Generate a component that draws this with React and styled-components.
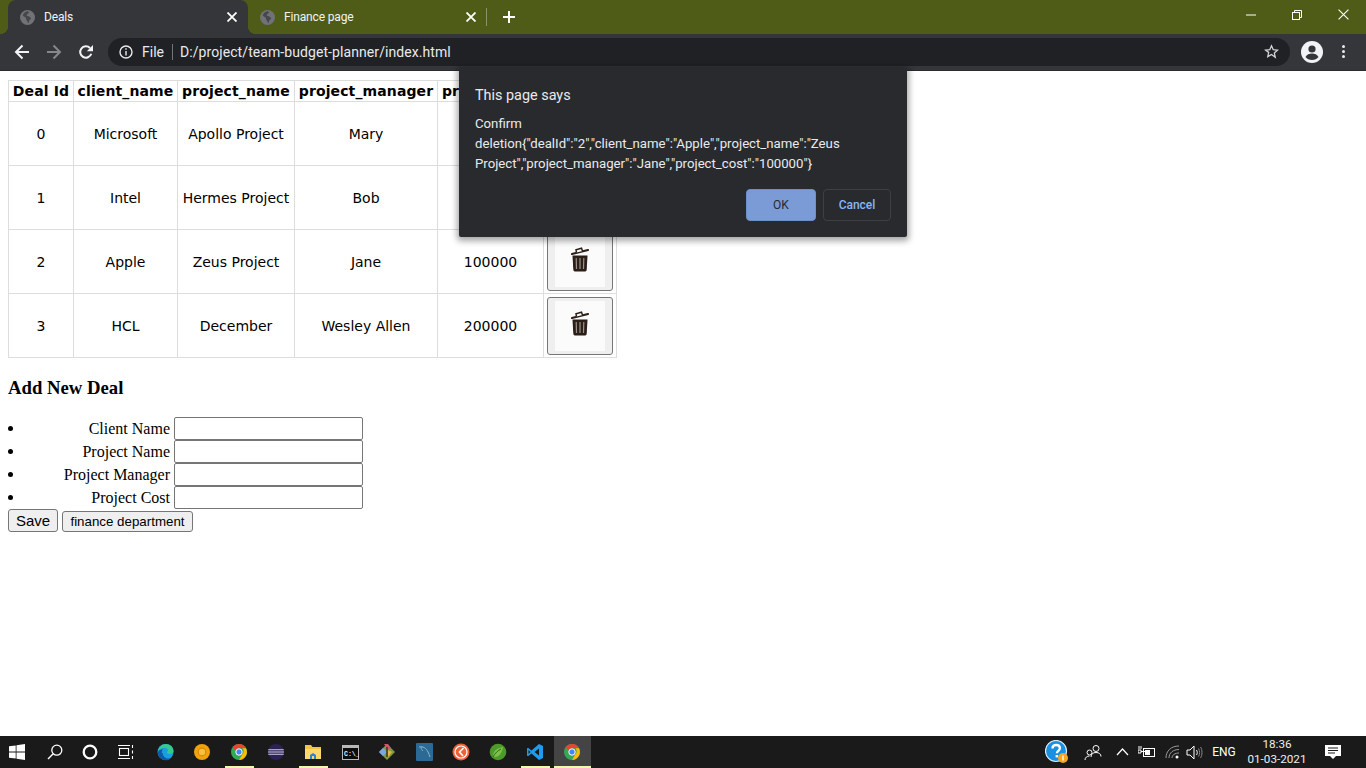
import React from 'react';
import styled, { createGlobalStyle } from 'styled-components';

const Global = createGlobalStyle`
  html, body { margin: 0; padding: 0; height: 100%; overflow: hidden; background: #fff; }
  #root { height: 100%; }
`;

const UI_FONT = `Roboto, "Open Sans", sans-serif`;

const Screen = styled.div`
  position: relative;
  display: flex;
  flex-direction: column;
  height: 768px;
  width: 1366px;
  font-family: "Liberation Serif", serif;
`;

/* ---------- browser chrome ---------- */
const TabBar = styled.div`
  display: flex;
  align-items: stretch;
  height: 34px;
  padding-left: 8px;
  background: #4e5c18;
  color: #fff;
  font: 12px ${UI_FONT};
`;

const Tab = styled.div`
  position: relative;
  display: flex;
  align-items: center;
  width: ${(p) => (p.$active ? 240 : 238)}px;
  padding: 0 ${(p) => (p.$active ? 1 : 0)}px 0 12px;
  box-sizing: border-box;
  background: ${(p) => (p.$active ? '#35363a' : 'transparent')};
  border-radius: 8px 8px 0 0;

  &::before,
  &::after {
    content: '';
    display: ${(p) => (p.$active ? 'block' : 'none')};
    position: absolute;
    bottom: 0;
    width: 8px;
    height: 8px;
  }

  &::before {
    left: -8px;
    background: radial-gradient(circle at 0 0, transparent 8px, #35363a 8px);
  }

  &::after {
    right: -8px;
    background: radial-gradient(circle at 100% 0, transparent 8px, #35363a 8px);
  }
`;

const TabTitle = styled.span`
  flex: 1;
  margin-left: 9px;
  color: #f1f3f4;
  letter-spacing: -0.15px;
`;

const TabClose = styled.span`
  display: flex;
  width: 16px;
  justify-content: center;
  margin-right: 7px;
`;

const TabDivider = styled.div`
  width: 1px;
  height: 18px;
  margin: 8px 0 0 0;
  background: #8b9468;
`;

const NewTab = styled.div`
  display: flex;
  align-items: center;
  justify-content: center;
  width: 44px;
`;

const WindowControls = styled.div`
  display: flex;
  margin-left: auto;
  padding-right: 0;
`;

const WindowButton = styled.div`
  display: flex;
  align-items: center;
  justify-content: center;
  width: 46px;
  height: 29px;
`;

const Toolbar = styled.div`
  display: flex;
  align-items: center;
  height: 37px;
  box-sizing: border-box;
  padding: 0 0 1px 6px;
  background: #35363a;
  border-bottom: 1px solid #2a2b2e;
  color: #f1f3f4;
`;

const NavButton = styled.div`
  display: flex;
  align-items: center;
  justify-content: center;
  width: 32px;
  height: 28px;
`;

const Omnibox = styled.div`
  display: flex;
  align-items: center;
  width: 1182px;
  height: 28px;
  box-sizing: border-box;
  margin-left: 6px;
  padding: 0 11px 0 11px;
  background: #202124;
  border-radius: 14px;
  font: 14px ${UI_FONT};
`;

const FileLabel = styled.span`
  margin-left: 9px;
  padding-right: 8px;
  border-right: 1px solid #70757a;
  line-height: 16px;
  color: #e8eaed;
`;

const Url = styled.span`
  flex: 1;
  margin-left: 7px;
  color: #e8eaed;
  letter-spacing: 0.08px;
`;

const Avatar = styled.div`
  display: flex;
  justify-content: center;
  width: 24px;
  margin-left: 10px;
`;

const MenuDots = styled.div`
  display: flex;
  flex-direction: column;
  gap: 2px;
  margin-left: 18px;
`;

const Dot = styled.i`
  display: block;
  width: 3px;
  height: 3px;
  border-radius: 50%;
  background: #e8eaed;
`;

/* ---------- page ---------- */
const Page = styled.main`
  flex: 1;
  padding: 9px 8px 8px;
  background: #fff;
  color: #000;
`;

const Table = styled.table`
  border-collapse: collapse;
  table-layout: fixed;
  width: 608px;
  font: 14px "DejaVu Sans", Verdana, sans-serif;
  color: #000;
`;

const Th = styled.th`
  border: 1px solid #ddd;
  height: 20px;
  padding: 0;
  font-weight: 700;
  font-size: 14px;
  letter-spacing: 0.12px;
  text-align: center;
  white-space: nowrap;
  overflow: hidden;
`;

const Td = styled.td`
  border: 1px solid #ddd;
  height: 63px;
  padding: 0;
  text-align: center;
`;

const DeleteButton = styled.button`
  display: flex;
  align-items: center;
  justify-content: center;
  width: 66px;
  height: 58px;
  margin: 0 auto;
  padding: 0;
  background: #efefef;
  border: 1px solid #767676;
  border-radius: 3px;
`;

const TrashTile = styled.span`
  display: flex;
  align-items: center;
  justify-content: center;
  width: 50px;
  height: 50px;
  box-sizing: border-box;
  padding-bottom: 5px;
  background: #fbfbfb;
`;

const Heading = styled.h3`
  margin: 19px 0 19px;
  font-size: 18.72px;
  line-height: 21px;
`;

const FieldList = styled.ul`
  margin: 0;
  padding: 0;
  list-style: none;
`;

const Field = styled.li`
  display: flex;
  align-items: center;
  height: 23px;
  font-size: 16px;

  &::before {
    content: '';
    width: 5px;
    height: 5px;
    margin-right: 1px;
    margin-left: 0;
    border-radius: 50%;
    background: #000;
  }
`;

const FieldLabel = styled.label`
  width: 156px;
  text-align: right;
`;

const FieldInput = styled.input`
  width: 189px;
  height: 23px;
  box-sizing: border-box;
  margin-left: 4px;
  padding: 1px 2px;
  background: #fff;
  border: 1px solid #767676;
  border-radius: 2px;
`;

const Actions = styled.div`
  display: flex;
  align-items: flex-end;
  gap: 4px;
`;

const FormButton = styled.button`
  height: ${(p) => (p.$large ? 23 : 21)}px;
  width: ${(p) => (p.$large ? 50 : 131)}px;
  padding: 0;
  background: #efefef;
  border: 1px solid #767676;
  border-radius: 3px;
  color: #000;
  font: ${(p) => (p.$large ? 15 : 13.33)}px "Liberation Sans", Arial, sans-serif;
`;

/* ---------- confirm dialog ---------- */
const Dialog = styled.div`
  position: absolute;
  top: 67px;
  left: 459px;
  width: 448px;
  height: 170px;
  box-sizing: border-box;
  padding: 19px 16px 16px;
  background: #292a2d;
  border-radius: 0 0 2px 2px;
  box-shadow: 0 2px 6px 2px rgba(0, 0, 0, 0.35);
  color: #e8eaed;
  font-family: ${UI_FONT};
`;

const DialogTitle = styled.div`
  font-size: 14.4px;
  line-height: 20px;
`;

const DialogMessage = styled.div`
  width: 400px;
  margin-top: 8px;
  font-size: 13.2px;
  line-height: 20px;
`;

const DialogActions = styled.div`
  display: flex;
  justify-content: flex-end;
  gap: 7px;
  margin-top: 15px;
`;

const DialogButton = styled.div`
  display: flex;
  align-items: center;
  justify-content: center;
  width: ${(p) => (p.$primary ? 70 : 68)}px;
  height: 32px;
  box-sizing: border-box;
  border: 1px solid ${(p) => (p.$primary ? '#6f8fc9' : '#3c4043')};
  border-radius: 4px;
  background: ${(p) => (p.$primary ? '#7a9bd6' : 'transparent')};
  color: ${(p) => (p.$primary ? '#292a2d' : '#8ab4f8')};
  font-size: 12px;
  font-weight: ${(p) => (p.$primary ? 400 : 500)};
`;

/* ---------- taskbar ---------- */
const Taskbar = styled.footer`
  display: flex;
  align-items: stretch;
  height: 32px;
  background: #1a1a1a;
  color: #fff;
  font: 12px ${UI_FONT};
`;

const Slot = styled.div`
  position: relative;
  display: flex;
  align-items: center;
  justify-content: center;
  flex: none;
  width: ${(p) => p.$w || 37}px;
  background: ${(p) => (p.$focused ? '#444' : 'transparent')};

  &::after {
    content: '';
    display: ${(p) => (p.$running ? 'block' : 'none')};
    position: absolute;
    left: ${(p) => (p.$focused ? 0 : 4)}px;
    right: ${(p) => (p.$focused ? 0 : 4)}px;
    bottom: 0;
    height: 2px;
    background: #f3f6b0;
  }
`;

const Tray = styled.div`
  display: flex;
  align-items: stretch;
  margin-left: auto;
  padding-right: 14px;
`;

const Clock = styled.div`
  display: flex;
  flex-direction: column;
  align-items: center;
  font-size: 11.7px;
  line-height: 15px;
  color: #eee;
`;

/* ---------- icons ---------- */
const Globe = () => (
  <svg width="15" height="15" viewBox="0 0 16 16">
    <circle cx="8" cy="8" r="8" fill="#6f7276" />
    <path d="M8 1c-1 1-3 1-4 2.500L3 6l3 2 1 3 2 3 1-3 2-2-2-2-3-1 1-2 2-1z" fill="#45474a" />
  </svg>
);

const Cross = ({ size = 10, sw = 1.8, color = '#fff' }) => (
  <svg width={size} height={size} viewBox="0 0 10 10">
    <path d="M.5.500l9 9M9.500.500l-9 9" stroke={color} strokeWidth={sw} fill="none" />
  </svg>
);

const ArrowIcon = ({ dir = 'left', color = '#f1f3f4' }) => (
  <svg width="16" height="16" viewBox="0 0 16 16" style={{ transform: dir === 'right' ? 'scaleX(-1)' : undefined }}>
    <path d="M15 8H2M8.500 1.500L2 8l6.500 6.500" stroke={color} strokeWidth="2" fill="none" />
  </svg>
);

const ReloadIcon = () => (
  <svg width="16" height="16" viewBox="0 0 16 16">
    <path d="M13.300 9.800A5.700 5.700 0 1 1 12 4" stroke="#f1f3f4" strokeWidth="2" fill="none" />
    <path d="M15 1v6.200H8.800z" fill="#f1f3f4" />
  </svg>
);

const InfoIcon = () => (
  <svg width="14" height="14" viewBox="0 0 14 14">
    <circle cx="7" cy="7" r="6" stroke="#e8eaed" strokeWidth="1.400" fill="none" />
    <path d="M6.300 6h1.400v4.500H6.300zM6.300 3.300h1.400v1.500H6.300z" fill="#e8eaed" />
  </svg>
);

const StarIcon = () => (
  <svg width="15" height="15" viewBox="0 0 24 24" style={{ marginLeft: 'auto' }}>
    <path d="M12 2.800l2.800 6.300 6.800.700-5.100 4.600 1.500 6.800L12 16.700l-6 3.500 1.500-6.800L2.400 9.800l6.800-.700z" fill="none" stroke="#d5d7da" strokeWidth="2" />
  </svg>
);

const AvatarIcon = () => (
  <svg width="22" height="22" viewBox="0 0 22 22">
    <circle cx="11" cy="11" r="11" fill="#f1f3f4" />
    <circle cx="11" cy="8" r="3.600" fill="#35363a" />
    <path d="M4.500 16c1-2.700 4-3.600 6.500-3.600s5.500.9 6.500 3.600c-1.500 1.900-3.800 3-6.500 3s-5-1.100-6.500-3z" fill="#35363a" />
  </svg>
);

const TrashIcon = () => (
  <svg width="18" height="26" viewBox="0 0 18 26">
    <path d="M1 8L17 4" stroke="#2b1f17" strokeWidth="2.200" strokeLinecap="round" />
    <path d="M5.500 6.500l-.5-2.700 5.500-1.600 1 2.800" stroke="#2b1f17" strokeWidth="1.500" fill="#fff" />
    <path d="M1.500 9.500h15l-.8 14.200c-.1 1.200-.9 1.800-2 1.800H4.300c-1.100 0-1.900-.6-2-1.800z" fill="#2b1f17" />
    <path d="M5.200 12l.3 11M9 12v11M12.800 12l-.3 11" stroke="#9c948d" strokeWidth="1.200" />
  </svg>
);

const WindowsLogo = () => (
  <svg width="16" height="16" viewBox="0 0 16 16">
    <path d="M0 2.300l6.700-.9v6.200H0zM7.500 1.300L16 0v7.600H7.500zM0 8.400h6.700v6.200L0 13.700zM7.500 8.400H16V16l-8.500-1.300z" fill="#fff" />
  </svg>
);

const SearchGlyph = () => (
  <svg width="16" height="16" viewBox="0 0 16 16">
    <circle cx="9.800" cy="6.200" r="5" stroke="#fff" strokeWidth="1.300" fill="none" />
    <path d="M6.200 9.800L1 15" stroke="#fff" strokeWidth="1.400" />
  </svg>
);

const CortanaRing = () => (
  <svg width="16" height="16" viewBox="0 0 16 16">
    <circle cx="8" cy="8" r="6.300" stroke="#fff" strokeWidth="2.300" fill="none" />
  </svg>
);

const TaskView = () => (
  <svg width="17" height="16" viewBox="0 0 17 16" fill="none" stroke="#fff" strokeWidth="1.100">
    <rect x="2.500" y="4.500" width="9" height="7" />
    <path d="M1 1.500h12M1 14.500h12M15.500 1v3M15.500 6.500v3M15.500 12v3" />
  </svg>
);

const EdgeLogo = () => (
  <svg width="17" height="18" viewBox="0 0 18 18">
    <circle cx="9" cy="9" r="8.500" fill="#1b9de2" />
    <path d="M1 8c1-4.500 4.500-7.500 8.500-7.500 4.500 0 8 3.300 8 7.500 0 2.200-2 3-4 3-1.500 0-3-.5-3-1.500 0-1 1.500-1.300 1-3C11 5 9.500 4.200 7.500 4.500 4 5 2 6.500 1 8z" fill="#36c98e" />
    <path d="M6 10c0 4 4 7 8.500 5.500-1.700 2-4.500 2.700-7 2C3.500 16.500 1 13 1 9c1-2 3-3 5-3-.4 1-.9 2.500-1 4z" fill="#0c59a4" />
  </svg>
);

const CanaryLogo = () => (
  <svg width="18" height="18" viewBox="0 0 18 18">
    <circle cx="9" cy="9" r="8" fill="#f0a30a" />
    <circle cx="9" cy="9" r="3.800" fill="#f7c23f" stroke="#d98a06" strokeWidth="1.200" />
  </svg>
);

const ChromeLogo = () => (
  <svg width="18" height="18" viewBox="0 0 18 18">
    <circle cx="9" cy="9" r="8" fill="#34a853" />
    <path d="M9 1a8 8 0 0 1 7 4.200H9a3.900 3.900 0 0 0-3.700 2.600L2.700 4A8 8 0 0 1 9 1z" fill="#ea4335" />
    <path d="M16 5.200A8 8 0 0 1 9 17l3.300-5.800a3.900 3.900 0 0 0 0-6z" fill="#fbbc05" />
    <circle cx="9" cy="9" r="3.200" fill="#4285f4" stroke="#fff" strokeWidth="1" />
  </svg>
);

const EclipseLogo = () => (
  <svg width="18" height="18" viewBox="0 0 18 18">
    <circle cx="9" cy="9" r="8" fill="#2c2255" />
    <path d="M1.300 6.800h15.400M1 9h16M1.300 11.200h15.400" stroke="#cfcbe6" strokeWidth="1.100" />
  </svg>
);

const FolderLogo = () => (
  <svg width="18" height="16" viewBox="0 0 18 16">
    <path d="M1 1h6l1.500 2H17v12H1z" fill="#f3c343" />
    <path d="M1 5h16v10H1z" fill="#fbd96a" />
    <path d="M6 15v-4l3-2 3 2v4z" fill="#2b86cf" />
    <path d="M8 15v-3h2v3z" fill="#fbd96a" />
  </svg>
);

const CmdLogo = () => (
  <svg width="17" height="15" viewBox="0 0 17 15">
    <rect x=".5" y=".5" width="16" height="14" fill="#0c0c0c" stroke="#b8b8b8" />
    <path d="M1 1h15v2H1z" fill="#b8b8b8" />
    <text x="2" y="11" fontSize="6.500" fontWeight="700" fontFamily="Liberation Mono, monospace" fill="#eee">C:\_</text>
  </svg>
);

const KrakenLogo = () => (
  <svg width="18" height="18" viewBox="0 0 18 18">
    <path d="M9 1l8 8-8 8-8-8z" fill="#7f9a3f" />
    <path d="M1 9l4-4 4 4-4 4z" fill="#7aa6e8" />
    <path d="M6 1l4 0 3 4-3 2z" fill="#d6536a" />
    <path d="M10 7l4 2-4 5z" fill="#e0b64a" />
    <path d="M9 4v10" stroke="#222" strokeWidth="1.200" />
  </svg>
);

const MysqlLogo = () => (
  <svg width="17" height="18" viewBox="0 0 17 18">
    <rect width="17" height="18" rx="1" fill="#2a6a94" />
    <path d="M3 4c4-1 7 1 9 5 .7 1.500 1.500 3 2 5M5 4c0 2 1 3 2 4" stroke="#8fb6cf" strokeWidth="1" fill="none" />
  </svg>
);

const PostmanLogo = () => (
  <svg width="18" height="18" viewBox="0 0 18 18">
    <circle cx="9" cy="9" r="8.500" fill="#f0613a" />
    <circle cx="9" cy="9" r="6" fill="none" stroke="#fff" strokeWidth="1.200" />
    <path d="M11.500 5L7.500 9l3.500 4" stroke="#fff" strokeWidth="1.600" fill="none" />
  </svg>
);

const SpringLogo = () => (
  <svg width="18" height="18" viewBox="0 0 18 18">
    <circle cx="9" cy="9" r="8.300" fill="#4c9a2a" />
    <path d="M4 13c0-5 4-8 10-9-1 6-4 10-8 10-.8 0-1.500-.4-2-1z" fill="#7cc04a" />
    <path d="M4 14c2-4 5-6.500 8-8" stroke="#2f6b16" strokeWidth="1" fill="none" />
  </svg>
);

const VsCodeLogo = () => (
  <svg width="18" height="18" viewBox="0 0 18 18">
    <path d="M13 1l4 2v12l-4 2L5.500 10.500 2 13.200 1 12.500V5.500l1-.7 3.500 2.700z" fill="#1f9cf0" />
    <path d="M13 5.500L8.500 9l4.500 3.500z" fill="#1a1a1a" />
    <path d="M2.500 7l2 2-2 2z" fill="#1a1a1a" />
  </svg>
);

const HelpBadge = () => (
  <svg width="24" height="24" viewBox="0 0 24 24">
    <circle cx="11" cy="11" r="10.500" fill="#1b8fe0" stroke="#d6ecfb" strokeWidth="1.200" />
    <path d="M7.500 8.500c0-2.300 1.700-3.500 3.700-3.500s3.700 1.200 3.700 3.200c0 2.600-3 2.600-3 5" stroke="#fff" strokeWidth="2.300" fill="none" />
    <rect x="10.600" y="15" width="2.400" height="2.400" fill="#fff" />
    <circle cx="18" cy="18" r="5" fill="#f5a623" />
    <path d="M17.300 15.500h1.400v5h-1.400z" fill="#fff" />
  </svg>
);

const PeopleIcon = () => (
  <svg width="18" height="17" viewBox="0 0 18 17" fill="none" stroke="#fff" strokeWidth="1">
    <circle cx="12" cy="4.500" r="3" />
    <path d="M7 13c0-3 2-4.500 5-4.500s5 1.500 5 4" />
    <circle cx="5.500" cy="8.500" r="2.500" />
    <path d="M1 16c0-2.500 2-4 4.500-4" />
  </svg>
);

const Chevron = () => (
  <svg width="13" height="8" viewBox="0 0 13 8">
    <path d="M1 7l5.500-6L12 7" stroke="#fff" strokeWidth="1.200" fill="none" />
  </svg>
);

const BatteryIcon = () => (
  <svg width="18" height="14" viewBox="0 0 18 14" fill="none" stroke="#fff">
    <rect x="5.500" y="3.500" width="11" height="8" />
    <path d="M0 5h3v3H0zM3 6.500h4" />
    <path d="M7 5h5v5H7z" fill="#fff" stroke="none" />
    <path d="M1 1v3M3 1v3" />
  </svg>
);

const WifiIcon = () => (
  <svg width="15" height="14" viewBox="0 0 15 14" fill="none" stroke="#9a9a9a">
    <path d="M1 13C1 6 6 1 14 1M4 13c0-5 4-8.500 10-8.500M7 13c0-3 3-5 7-5" />
    <circle cx="12" cy="12" r="1.500" fill="#fff" stroke="none" />
  </svg>
);

const SpeakerIcon = () => (
  <svg width="18" height="15" viewBox="0 0 18 15" fill="none" stroke="#fff">
    <path d="M1 5h3l4-4v13l-4-4H1z" />
    <path d="M10.500 5c1 1.500 1 3.500 0 5" />
    <path d="M12.500 3.500c1.500 2.500 1.500 5.500 0 8M14.500 2c2 3 2 8 0 11" stroke="#888" />
  </svg>
);

const NotificationIcon = () => (
  <svg width="16" height="16" viewBox="0 0 16 16">
    <path d="M0 1h16v11h-5l-3 3-3-3H0z" fill="#fff" />
    <path d="M3 4h10M3 6.500h10M3 9h7" stroke="#1a1a1a" strokeWidth="1" />
  </svg>
);

/* ---------- data ---------- */
const columns = [
  { label: 'Deal Id', width: 65 },
  { label: 'client_name', width: 104 },
  { label: 'project_name', width: 117 },
  { label: 'project_manager', width: 143 },
  { label: 'project_cost', width: 106 },
  { label: '', width: 73 },
];

const deals = [
  { id: 0, client: 'Microsoft', project: 'Apollo Project', manager: 'Mary', cost: '100000' },
  { id: 1, client: 'Intel', project: 'Hermes Project', manager: 'Bob', cost: '100000' },
  { id: 2, client: 'Apple', project: 'Zeus Project', manager: 'Jane', cost: '100000' },
  { id: 3, client: 'HCL', project: 'December', manager: 'Wesley Allen', cost: '200000' },
];

const fields = ['Client Name', 'Project Name', 'Project Manager', 'Project Cost'];

const apps = [
  { key: 'edge', icon: <EdgeLogo /> },
  { key: 'canary', icon: <CanaryLogo /> },
  { key: 'chrome', icon: <ChromeLogo />, running: true },
  { key: 'eclipse', icon: <EclipseLogo /> },
  { key: 'folder', icon: <FolderLogo />, running: true },
  { key: 'cmd', icon: <CmdLogo /> },
  { key: 'kraken', icon: <KrakenLogo /> },
  { key: 'mysql', icon: <MysqlLogo /> },
  { key: 'postman', icon: <PostmanLogo /> },
  { key: 'spring', icon: <SpringLogo /> },
  { key: 'vscode', icon: <VsCodeLogo />, running: true },
  { key: 'chrome2', icon: <ChromeLogo />, running: true, focused: true },
];

const App = () => (
  <Screen>
    <Global />
    <TabBar>
      <Tab $active>
        <Globe />
        <TabTitle>Deals</TabTitle>
        <TabClose><Cross /></TabClose>
      </Tab>
      <Tab>
        <Globe />
        <TabTitle>Finance page</TabTitle>
        <TabClose><Cross /></TabClose>
      </Tab>
      <TabDivider />
      <NewTab>
        <svg width="12" height="12" viewBox="0 0 12 12">
          <path d="M6 0v12M0 6h12" stroke="#fff" strokeWidth="2" />
        </svg>
      </NewTab>
      <WindowControls>
        <WindowButton>
          <svg width="10" height="2" viewBox="0 0 10 2"><path d="M0 1h10" stroke="#fff" /></svg>
        </WindowButton>
        <WindowButton>
          <svg width="10" height="10" viewBox="0 0 10 10" fill="none" stroke="#fff">
            <rect x=".5" y="2.500" width="7" height="7" />
            <path d="M2.500 2.500v-2h7v7h-2" />
          </svg>
        </WindowButton>
        <WindowButton>
          <Cross size={11} sw={1} />
        </WindowButton>
      </WindowControls>
    </TabBar>

    <Toolbar>
      <NavButton><ArrowIcon /></NavButton>
      <NavButton><ArrowIcon dir="right" color="#85878a" /></NavButton>
      <NavButton><ReloadIcon /></NavButton>
      <Omnibox>
        <InfoIcon />
        <FileLabel>File</FileLabel>
        <Url>D:/project/team-budget-planner/index.html</Url>
        <StarIcon />
      </Omnibox>
      <Avatar><AvatarIcon /></Avatar>
      <MenuDots><Dot /><Dot /><Dot /></MenuDots>
    </Toolbar>

    <Page>
      <Table>
        <colgroup>
          {columns.map((col) => <col key={col.label} width={col.width} />)}
        </colgroup>
        <thead>
          <tr>
            {columns.map((col) => <Th key={col.label}>{col.label}</Th>)}
          </tr>
        </thead>
        <tbody>
          {deals.map((deal) => (
            <tr key={deal.id}>
              <Td>{deal.id}</Td>
              <Td>{deal.client}</Td>
              <Td>{deal.project}</Td>
              <Td>{deal.manager}</Td>
              <Td>{deal.cost}</Td>
              <Td>
                <DeleteButton>
                  <TrashTile><TrashIcon /></TrashTile>
                </DeleteButton>
              </Td>
            </tr>
          ))}
        </tbody>
      </Table>

      <Heading>Add New Deal</Heading>
      <FieldList>
        {fields.map((name) => (
          <Field key={name}>
            <FieldLabel>{name}</FieldLabel>
            <FieldInput />
          </Field>
        ))}
      </FieldList>
      <Actions>
        <FormButton $large>Save</FormButton>
        <FormButton>finance department</FormButton>
      </Actions>
    </Page>

    <Taskbar>
      <Slot $w={34}><WindowsLogo /></Slot>
      <Slot $w={42}><SearchGlyph /></Slot>
      <Slot $w={28}><CortanaRing /></Slot>
      <Slot $w={42.5}><TaskView /></Slot>
      {apps.map((app) => (
        <Slot key={app.key} $running={app.running} $focused={app.focused}>{app.icon}</Slot>
      ))}
      <Tray>
        <Slot $w={34}><HelpBadge /></Slot>
        <Slot $w={38}><PeopleIcon /></Slot>
        <Slot $w={20}><Chevron /></Slot>
        <Slot $w={30}><BatteryIcon /></Slot>
        <Slot $w={20}><WifiIcon /></Slot>
        <Slot $w={26}><SpeakerIcon /></Slot>
        <Slot $w={32}>ENG</Slot>
        <Slot $w={74}>
          <Clock>
            <span>18:36</span>
            <span>01-03-2021</span>
          </Clock>
        </Slot>
        <Slot $w={38}><NotificationIcon /></Slot>
      </Tray>
    </Taskbar>

    <Dialog>
      <DialogTitle>This page says</DialogTitle>
      <DialogMessage>
        {'Confirm deletion{"dealId":"2","client_name":"Apple","project_name":"Zeus Project","project_manager":"Jane","project_cost":"100000"}'}
      </DialogMessage>
      <DialogActions>
        <DialogButton $primary>OK</DialogButton>
        <DialogButton>Cancel</DialogButton>
      </DialogActions>
    </Dialog>
  </Screen>
);

export default App;
